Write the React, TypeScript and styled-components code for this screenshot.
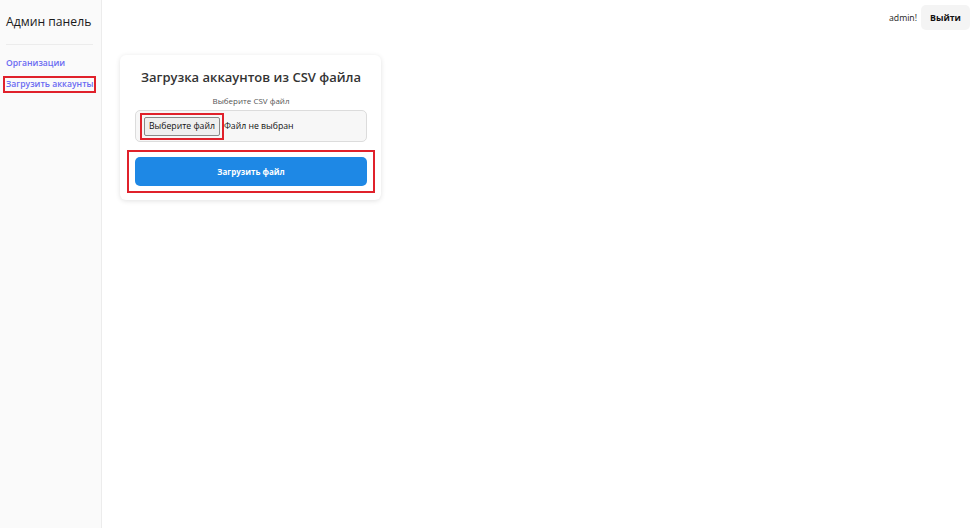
import React from 'react';
import styled, { createGlobalStyle } from 'styled-components';

const GlobalStyle = createGlobalStyle`
  html, body {
    margin: 0;
    padding: 0;
    background: #ffffff;
    font-family: "Open Sans", "Noto Sans", "Liberation Sans", sans-serif;
    color: #222;
  }
  * { box-sizing: border-box; }
`;

// Red review marks drawn around the elements in the screenshot
const Marked = styled.div`
  border: 2px solid #e0212b;
`;

// Page shell: sidebar + main column
const Layout = styled.div`
  display: flex;
  height: 100vh;
`;

const Sidebar = styled.aside`
  width: 102px;
  flex-shrink: 0;
  background: #fafafa;
  border-right: 1px solid #ececec;
  padding: 13px 8px 0 6px;
  display: flex;
  flex-direction: column;
`;

const Brand = styled.h1`
  margin: 0;
  font-size: 12.2px;
  font-weight: 400;
  line-height: 18px;
  color: #1a1a1a;
  white-space: nowrap;
`;

const Divider = styled.hr`
  border: none;
  border-top: 1px solid #ececec;
  margin: 13px 0 12px;
`;

const NavList = styled.nav`
  display: flex;
  flex-direction: column;
  align-items: flex-start;
  gap: 6px;
`;

const NavLink = styled.a`
  display: block;
  font-size: 8.6px;
  font-weight: 600;
  line-height: 13px;
  color: #6b6bf2;
  text-decoration: none;
  white-space: nowrap;
`;

const NavMark = styled(Marked)`
  margin: 0 0 0 -3px;
  padding: 0 1px;
`;

const Main = styled.main`
  flex: 1;
  display: flex;
  flex-direction: column;
`;

const TopBar = styled.header`
  display: flex;
  justify-content: flex-end;
  align-items: center;
  gap: 4px;
  padding: 5px 4px 0 0;
`;

const Greeting = styled.span`
  font-size: 8.7px;
  color: #222;
`;

const LogoutButton = styled.button`
  height: 25px;
  width: 49px;
  padding: 0;
  border: none;
  border-radius: 5px;
  background: #f4f4f4;
  font-family: inherit;
  font-size: 8.8px;
  font-weight: 700;
  color: #111;
`;

const Content = styled.div`
  padding: 25px 0 0 18px;
`;

const Card = styled.section`
  width: 261px;
  background: #fff;
  border-radius: 6px;
  box-shadow: 0 1px 5px rgba(0, 0, 0, 0.12);
  padding: 13px 14px 7px 15px;
  display: flex;
  flex-direction: column;
`;

const CardTitle = styled.h2`
  margin: 0;
  text-align: center;
  font-size: 13px;
  font-weight: 600;
  line-height: 18px;
  color: #333;
  white-space: nowrap;
`;

const FieldLabel = styled.label`
  margin-top: 9px;
  text-align: center;
  font-size: 8px;
  line-height: 12px;
  color: #555;
`;

const FileBox = styled.div`
  margin-top: 3px;
  height: 32px;
  display: flex;
  align-items: center;
  padding: 0 4px;
  background: #f7f7f7;
  border: 1px solid #dcdcdc;
  border-radius: 5px;
`;

const PickMark = styled(Marked)`
  padding: 2px;
`;

const PickButton = styled.span`
  display: flex;
  align-items: center;
  height: 19px;
  padding: 0 4px;
  background: #efefef;
  border: 1px solid #8a8a8a;
  border-radius: 2px;
  font-size: 8.7px;
  color: #111;
`;

const FileStatus = styled.span`
  margin-left: 0;
  font-size: 8.7px;
  color: #111;
`;

const UploadMark = styled(Marked)`
  margin: 8px -8px 0;
  padding: 5px 6px;
`;

const UploadButton = styled.button`
  display: block;
  width: 100%;
  height: 29px;
  border: none;
  border-radius: 5px;
  background: #1e88e5;
  color: #fff;
  font-family: inherit;
  font-size: 8px;
  font-weight: 700;
`;

const App: React.FC = () => (
  <>
    <GlobalStyle />
    <Layout>
      <Sidebar>
        <Brand>Админ панель</Brand>
        <Divider />
        <NavList>
          <NavLink href="#">Организации</NavLink>
          <NavMark>
            <NavLink href="#">Загрузить аккаунты</NavLink>
          </NavMark>
        </NavList>
      </Sidebar>
      <Main>
        <TopBar>
          <Greeting>admin!</Greeting>
          <LogoutButton>Выйти</LogoutButton>
        </TopBar>
        <Content>
          <Card>
            <CardTitle>Загрузка аккаунтов из CSV файла</CardTitle>
            <FieldLabel>Выберите CSV файл</FieldLabel>
            <FileBox>
              <PickMark>
                <PickButton>Выберите файл</PickButton>
              </PickMark>
              <FileStatus>Файл не выбран</FileStatus>
            </FileBox>
            <UploadMark>
              <UploadButton>Загрузить файл</UploadButton>
            </UploadMark>
          </Card>
        </Content>
      </Main>
    </Layout>
  </>
);

export default App;
